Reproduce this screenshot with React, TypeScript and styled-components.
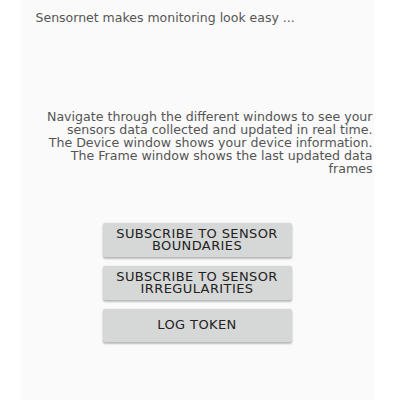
import React from "react";
import styled, { createGlobalStyle } from "styled-components";

const Global = createGlobalStyle`
  html, body { margin: 0; padding: 0; background: #ffffff; }
  body { font-family: "DejaVu Sans", "Liberation Sans", sans-serif; }
`;

const Page = styled.div`
  width: 400px;
  height: 400px;
  display: flex;
  justify-content: center;
  background: #ffffff;
`;

const Panel = styled.div`
  width: 353px;
  margin-left: -6px;
  height: 400px;
  background: #fafafa;
  box-sizing: border-box;
  padding: 10px 0 0 15px;
  display: flex;
  flex-direction: column;
`;

const Tagline = styled.div`
  font-size: 12.5px;
  color: #555;
  line-height: 16px;
`;

const Info = styled.div`
  margin-top: 84px;
  font-size: 12.6px;
  line-height: 13px;
  color: #555;
  text-align: right;
  white-space: nowrap;
  padding-right: 1px;
`;

const Buttons = styled.div`
  margin-top: 48px;
  display: flex;
  flex-direction: column;
  gap: 9px;
  align-items: center;
  padding-right: 15px;
`;

const Button = styled.button<{ $h?: number }>`
  width: 189px;
  height: ${(p) => p.$h ?? 34}px;
  border: none;
  border-radius: 2px;
  background: #d6d7d7;
  color: #222;
  font-family: "DejaVu Sans", sans-serif;
  font-size: 13px;
  line-height: 12.5px;
  letter-spacing: 0.4px;
  text-transform: uppercase;
  box-shadow: 0 2px 2px rgba(0, 0, 0, 0.24), 0 0 2px rgba(0, 0, 0, 0.12);
  padding: 0 4px;
`;

export default function App() {
  return (
    <Page>
      <Global />
      <Panel>
        <Tagline>Sensornet makes monitoring look easy ...</Tagline>
        <Info>
          Navigate through the different windows to see your
          <br />
          sensors data collected and updated in real time.
          <br />
          The Device window shows your device information.
          <br />
          The Frame window shows the last updated data
          <br />
          frames
        </Info>
        <Buttons>
          <Button>Subscribe to sensor boundaries</Button>
          <Button>Subscribe to sensor irregularities</Button>
          <Button $h={33}>Log token</Button>
        </Buttons>
      </Panel>
    </Page>
  );
}
